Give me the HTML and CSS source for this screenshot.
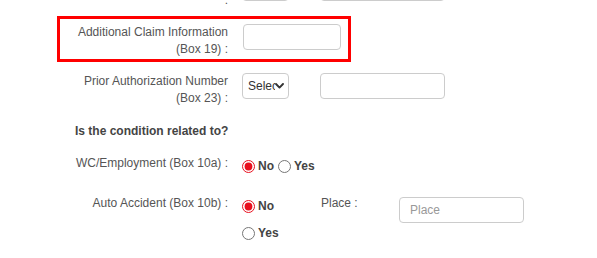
FILE: index.html
```html
<!DOCTYPE html>
<html lang="en">
<head>
    <meta charset="UTF-8">
    <meta name="viewport" content="width=device-width, initial-scale=1.0">
    <title>Claim Details</title>
    <link rel="stylesheet" href="styles.css">
</head>
<body>

<form class="claimForm">
    <div class="row">
        <label class="fieldLabel">Original Ref. No. (Box 22)<br>:</label>
        <div class="controls">
            <div class="selectWrap">
                <select class="selectBox"><option>Select</option></select>
                <svg class="chevron" width="9" height="6" viewBox="0 0 9 6"><path d="M1 1 L4.5 4.6 L8 1" fill="none" stroke="#333" stroke-width="1.9" stroke-linecap="round" stroke-linejoin="round"/></svg>
            </div>
            <input type="text" class="textBox wide">
        </div>
    </div>

    <div class="row flagged">
        <label class="fieldLabel" for="box19">Additional Claim Information (Box 19) :</label>
        <div class="controls">
            <input type="text" id="box19" class="textBox short">
        </div>
    </div>

    <div class="row priorRow">
        <label class="fieldLabel">Prior Authorization Number (Box 23) :</label>
        <div class="controls">
            <div class="selectWrap">
                <select class="selectBox"><option>Select</option></select>
                <svg class="chevron" width="9" height="6" viewBox="0 0 9 6"><path d="M1 1 L4.5 4.6 L8 1" fill="none" stroke="#333" stroke-width="1.9" stroke-linecap="round" stroke-linejoin="round"/></svg>
            </div>
            <input type="text" class="textBox wide">
        </div>
    </div>

    <h4 class="sectionTitle">Is the condition related to?</h4>

    <div class="row wcRow">
        <label class="fieldLabel">WC/Employment (Box 10a) :</label>
        <div class="controls">
            <div class="radioGroup">
                <label class="radioOption"><input type="radio" name="wc" checked>No</label>
                <label class="radioOption"><input type="radio" name="wc">Yes</label>
            </div>
        </div>
    </div>

    <div class="row autoRow">
        <label class="fieldLabel">Auto Accident (Box 10b) :</label>
        <div class="controls">
            <div class="radioGroup stacked">
                <label class="radioOption"><input type="radio" name="auto" checked>No</label>
                <label class="radioOption"><input type="radio" name="auto">Yes</label>
            </div>
            <label class="placeLabel" for="place">Place :</label>
            <input type="text" id="place" class="textBox place" placeholder="Place">
        </div>
    </div>
</form>

</body>
</html>
```

FILE: styles.css
```css
body {
    margin: 0;
    background: #fff;
    font-family: "Liberation Sans", Arial, Helvetica, sans-serif;
    font-size: 12px;
    line-height: 17px;
    color: #555;
}
.claimForm {
    margin-top: -25px;
    padding-left: 74px;
}
.row {
    display: grid;
    grid-template-columns: 154px 1fr;
    column-gap: 14px;
    align-items: start;
}
.fieldLabel {
    text-align: right;
}
.controls {
    display: flex;
    align-items: flex-start;
}
.flagged {
    margin: 7px 0 0 -17px;
    width: 274px;
    padding: 5px 0 2px 14px;
    border: 3px solid #ff0000;
    column-gap: 15px;
}
.flagged .fieldLabel {
    line-height: 16.5px;
}
.priorRow {
    margin-top: 11px;
}
.sectionTitle {
    margin: 16px 0 0 1px;
    font-size: 12px;
    line-height: 17px;
    font-weight: bold;
    color: #444;
}
.wcRow {
    margin-top: 15px;
}
.autoRow {
    margin-top: 20px;
}
.selectWrap {
    position: relative;
    margin-right: 31px;
}
.selectBox {
    appearance: none;
    -webkit-appearance: none;
    display: block;
    width: 47px;
    height: 26px;
    padding: 0 13px 0 5px;
    border: 1px solid #ccc;
    border-radius: 4px;
    background: #fff;
    font-family: inherit;
    font-size: 12px;
    color: #333;
}
.chevron {
    position: absolute;
    left: 33px;
    top: 10px;
    pointer-events: none;
}
.textBox {
    box-sizing: border-box;
    height: 26px;
    margin: 0;
    padding: 0 10px;
    border: 1px solid #ccc;
    border-radius: 4px;
    background: #fff;
    font-family: inherit;
    font-size: 12px;
    color: #333;
}
.textBox::placeholder {
    color: #999;
}
.wide {
    width: 125px;
}
.short {
    width: 98px;
}
.place {
    width: 125px;
    margin-top: 2px;
}
.radioGroup {
    display: flex;
    column-gap: 4px;
    padding-top: 3px;
}
.radioGroup.stacked {
    flex-direction: column;
    align-items: flex-start;
    row-gap: 10px;
    width: 79px;
}
.radioOption {
    display: inline-flex;
    align-items: center;
    gap: 3px;
    font-weight: bold;
    color: #444;
}
.radioOption input {
    width: 13px;
    height: 13px;
    margin: 0;
    accent-color: #e8101e;
}
.placeLabel {
    width: 78px;
}
```
